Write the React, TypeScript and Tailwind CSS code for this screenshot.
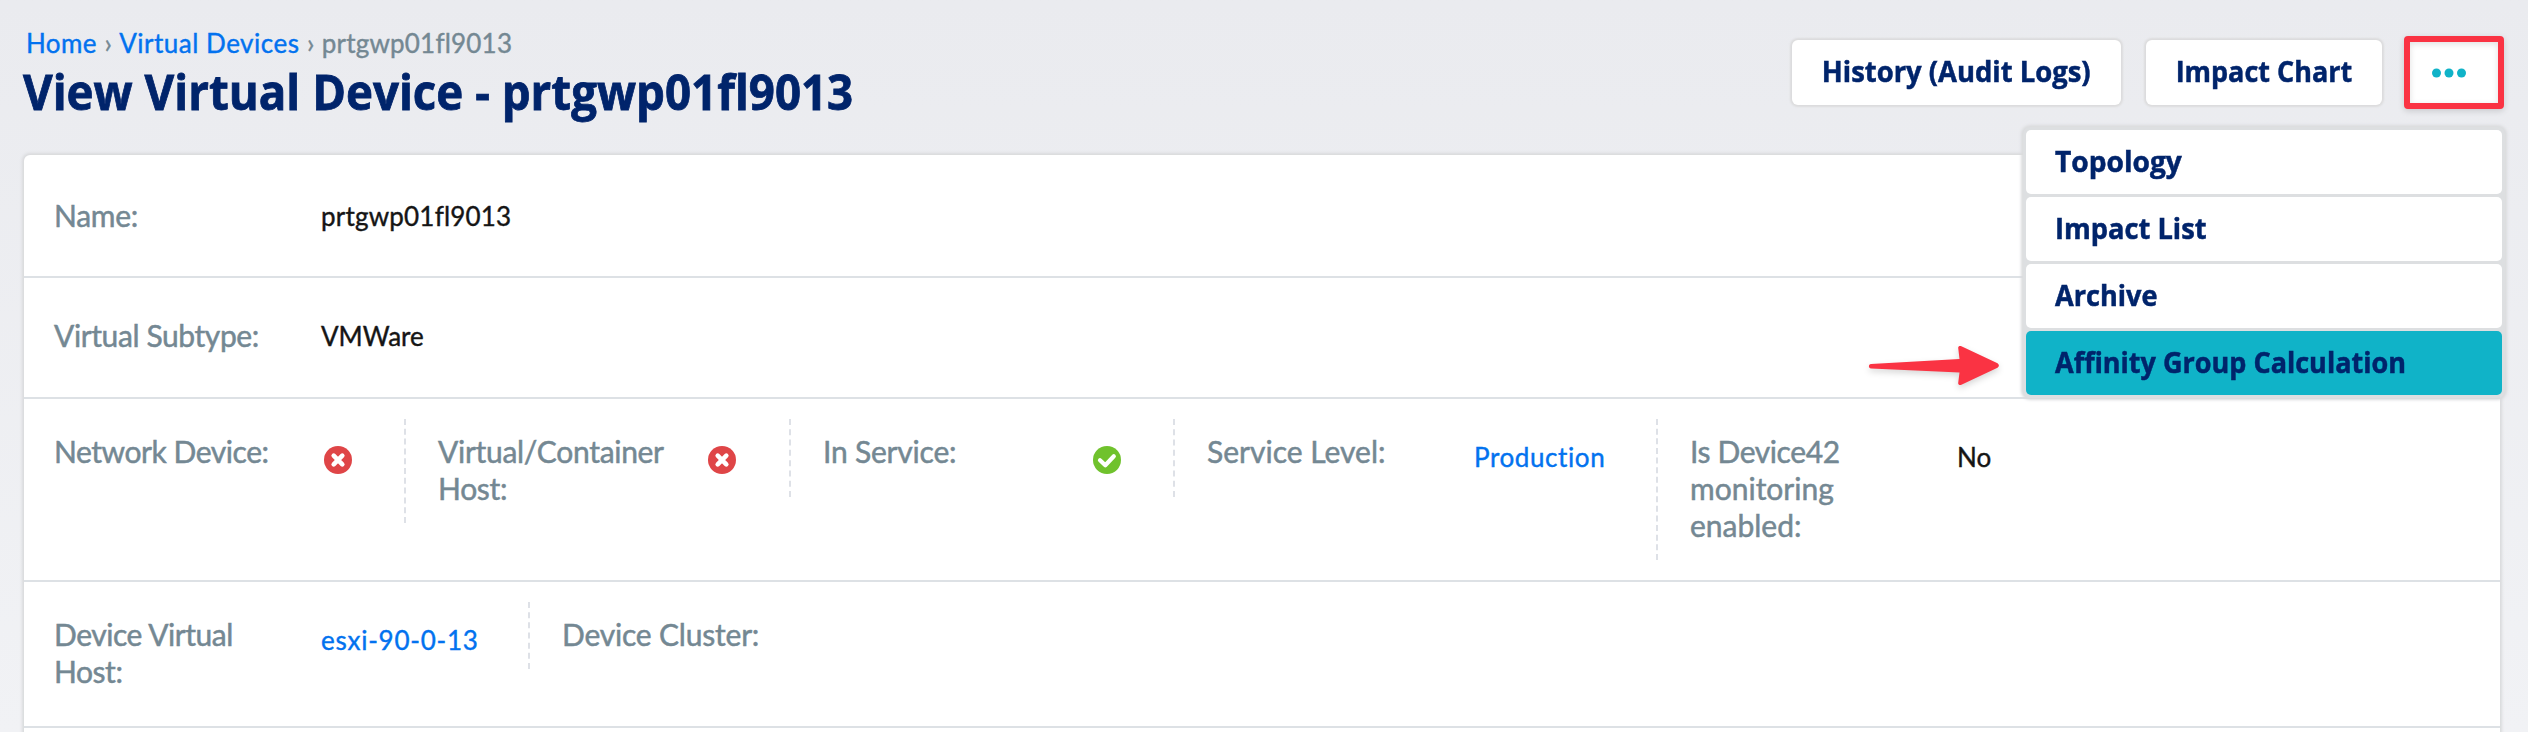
import type { ReactNode } from 'react';

const LATO = "font-['Lato','Liberation_Sans',sans-serif]";
const TITLE = "font-['Open_Sans','Noto_Sans',sans-serif]";

function CrossIcon() {
  return (
    <svg className="ml-[3px] mt-3 block size-7" viewBox="0 0 28 28">
      <circle cx="14" cy="14" r="14" fill="#df4547" />
      <path d="M9.7 9.7 18.3 18.3M18.3 9.7 9.7 18.3" stroke="#fff" strokeWidth="4.6" strokeLinecap="round" />
    </svg>
  );
}

function CheckIcon() {
  return (
    <svg className="ml-[3px] mt-3 block size-7" viewBox="0 0 28 28">
      <circle cx="14" cy="14" r="14" fill="#70c22d" />
      <path
        d="M7 14.2 12.3 19.2 20.8 10.3"
        fill="none"
        stroke="#fff"
        strokeWidth="4.2"
        strokeLinecap="round"
        strokeLinejoin="round"
      />
    </svg>
  );
}

function Label({ children, className = '' }: { children: ReactNode; className?: string }) {
  return (
    <div
      className={`w-[267px] shrink-0 text-[30px] leading-[37px] text-[#748893] [-webkit-text-stroke:0.5px_#748893] ${className}`}
    >
      {children}
    </div>
  );
}

function Value({ children, className = '' }: { children: ReactNode; className?: string }) {
  return (
    <div
      className={`relative top-px whitespace-nowrap text-[26px] leading-[37px] [-webkit-text-stroke-width:0.4px] [font-variant-ligatures:none] ${className}`}
    >
      {children}
    </div>
  );
}

function Cell({ children, className = '' }: { children: ReactNode; className?: string }) {
  return (
    <div className={`flex shrink-0 border-l-2 border-dashed border-[#dee1e7] pb-4 pl-8 pt-[14px] ${className}`}>
      {children}
    </div>
  );
}

function ActionButton({ children, className }: { children: ReactNode; className: string }) {
  return (
    <button
      className={`mt-1 flex h-[65px] items-center justify-center whitespace-nowrap rounded-[6px] bg-white pb-[3px] text-[29px] font-bold text-[#00246b] shadow-[0_0_2px_2px_#dcdcdd] [-webkit-text-stroke-width:0.5px] ${TITLE} ${className}`}
    >
      {children}
    </button>
  );
}

const menuItems = [
  { text: 'Topology', scale: 'scale-x-[0.97]', active: false },
  { text: 'Impact List', scale: 'scale-x-[0.94]', active: false },
  { text: 'Archive', scale: 'scale-x-[0.935]', active: false },
  { text: 'Affinity Group Calculation', scale: 'scale-x-[0.932]', active: true },
];

export default function App() {
  return (
    <div
      className={`relative flex h-[732px] w-[2528px] flex-col overflow-hidden bg-linear-to-b from-[#eaebef] to-[#f1f2f5] ${LATO}`}
    >
      <header className="flex h-[155px] shrink-0 justify-between pl-[23px] pr-6">
        <div className="pt-[27px]">
          <nav className="flex h-[31px] gap-[7.5px] pl-[3px] text-[26px] leading-8 text-[#748893] [-webkit-text-stroke-width:0.4px] [font-variant-ligatures:none]">
            <a className="tracking-[0.4px] text-[#0272ef]">Home</a>
            <span>›</span>
            <a className="tracking-[0.5px] text-[#0272ef]">Virtual Devices</a>
            <span>›</span>
            <span className="tracking-[0.2px]">prtgwp01fl9013</span>
          </nav>
          <h1
            className={`mt-[3px] origin-left scale-x-[0.932] whitespace-nowrap text-[49px] font-bold leading-[60px] text-[#00246b] [-webkit-text-stroke-width:0.8px] ${TITLE}`}
          >
            View Virtual Device - prtgwp01fl9013
          </h1>
        </div>
        <div className="flex items-start pt-9">
          <ActionButton className="mr-[25px] w-[329px]">
            <span className="scale-x-[0.945]">History (Audit Logs)</span>
          </ActionButton>
          <ActionButton className="mr-[22px] w-[236px]">
            <span className="scale-x-[0.93]">Impact Chart</span>
          </ActionButton>
          <button className="flex h-[73px] w-[100px] items-center justify-center rounded-[4px] border-[6px] border-[#fa3343] bg-white pr-[10px] shadow-[0_2px_6px_rgba(0,0,0,0.15),inset_0_2px_6px_rgba(0,0,0,0.12)]">
            <svg className="h-[10px] w-[36px]" viewBox="0 0 36 10" fill="#10b3c8">
              <circle cx="5.5" cy="5" r="4.5" />
              <circle cx="18" cy="5" r="4.5" />
              <circle cx="30.5" cy="5" r="4.5" />
            </svg>
          </button>
        </div>
      </header>

      <main className="ml-6 flex h-[620px] w-[2476px] shrink-0 flex-col rounded-[6px] bg-white shadow-[0_0_3px_2px_#d9dadc]">
        <section className="flex h-[123px] shrink-0 border-b-2 border-[#dde1e5] pl-[30px] pt-[42px]">
          <Label className="tracking-[-0.3px]">Name:</Label>
          <Value className="tracking-[0.2px] text-[#151515]">prtgwp01fl9013</Value>
        </section>
        <section className="flex h-[121px] shrink-0 border-b-2 border-[#dde1e5] pl-[30px] pt-[39px]">
          <Label className="tracking-[-0.4px]">Virtual Subtype:</Label>
          <Value className="text-[#151515]">VMWare</Value>
        </section>
        <section className="flex shrink-0 items-start border-b-2 border-[#dde1e5] py-5">
          <div className="flex w-[380px] pl-[30px] pt-[14px]">
            <Label className="tracking-[-0.45px]">Network Device:</Label>
            <Value className="h-0">
              <CrossIcon />
            </Value>
          </div>
          <Cell className="w-[385px]">
            <Label className="tracking-[-0.3px]">
              Virtual/Container
              <br />
              Host:
            </Label>
            <Value className="h-0">
              <CrossIcon />
            </Value>
          </Cell>
          <Cell className="min-h-[78px] w-[384px]">
            <Label className="tracking-[-0.2px]">In Service:</Label>
            <Value className="h-0">
              <CheckIcon />
            </Value>
          </Cell>
          <Cell className="min-h-[78px] w-[483px]">
            <Label>Service Level:</Label>
            <Value className="h-0 pt-[5px] tracking-[0.6px] text-[#0272ef]">Production</Value>
          </Cell>
          <Cell className="w-[500px]">
            <Label>
              <span className="tracking-[-0.4px]">Is Device42</span>
              <br />
              monitoring
              <br />
              enabled:
            </Label>
            <Value className="h-0 pt-[5px] text-[#151515]">No</Value>
          </Cell>
        </section>
        <section className="flex shrink-0 items-start border-b-2 border-[#dde1e5] py-5">
          <div className="flex w-[504px] pb-4 pl-[30px] pt-[14px]">
            <Label className="tracking-[-0.45px]">
              Device Virtual
              <br />
              Host:
            </Label>
            <Value className="h-0 pt-[5px] tracking-[0.75px] text-[#0272ef]">esxi-90-0-13</Value>
          </div>
          <Cell className="w-[500px]">
            <Label className="tracking-[-0.2px]">Device Cluster:</Label>
          </Cell>
        </section>
      </main>

      <div className="absolute left-[2023px] top-[127px] flex w-[482px] flex-col gap-[3px] rounded-[7px] bg-[#dddfe1] p-[3px] shadow-[0_0_3px_2px_#dadbdd]">
        {menuItems.map((item) => (
          <div
            key={item.text}
            className={`flex h-16 items-center rounded-[5px] pb-[3px] pl-[29px] text-[29px] font-bold text-[#00246b] [-webkit-text-stroke-width:0.5px] ${TITLE} ${
              item.active ? 'bg-[#10b3c8]' : 'bg-white'
            }`}
          >
            <span className={`origin-left whitespace-nowrap ${item.scale}`}>{item.text}</span>
          </div>
        ))}
      </div>

      <svg
        className="absolute left-[1860px] top-[335px] h-[65px] w-[150px] drop-shadow-[0_3px_3px_rgba(0,0,0,0.16)]"
        viewBox="0 0 150 65"
      >
        <path
          d="M11 29 99.5 24 98.2 13C98 11 100 10.4 101.4 11.3L137 28C139.5 29.3 139.5 31.7 137 33L101.4 49.7C100 50.6 98 50 98.2 48L99.5 37.4 11 33.6C8.2 33.3 8.2 29.3 11 29Z"
          fill="#fa3343"
        />
      </svg>
    </div>
  );
}
